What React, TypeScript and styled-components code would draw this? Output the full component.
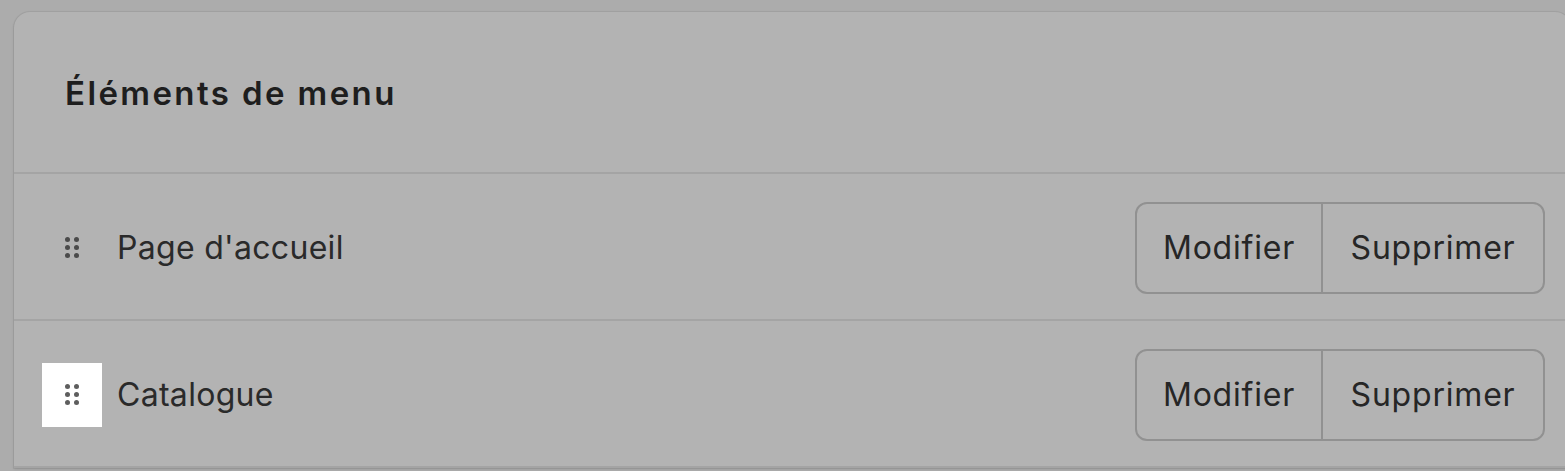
import React from "react";
import styled, { createGlobalStyle } from "styled-components";

const Global = createGlobalStyle`
  html, body {
    margin: 0;
    padding: 0;
    background: #acacac;
    overflow: hidden;
  }
  body {
    font-family: Inter, "Noto Sans", "Liberation Sans", sans-serif;
    -webkit-font-smoothing: antialiased;
  }
`;

const Page = styled.div`
  padding: 12px 0 0 14px;
  width: 1565px;
  height: 471px;
  box-sizing: border-box;
`;

const Card = styled.section`
  width: 1557px;
  background: #b3b3b3;
  border-radius: 16px 16px 0 0;
  box-shadow: 0 0 0 1px rgba(0, 0, 0, 0.05), 0 1px 3px rgba(0, 0, 0, 0.12);
`;

const Header = styled.header`
  height: 162px;
  box-sizing: border-box;
  display: flex;
  align-items: center;
  padding: 2px 0 0 51px;
  border-bottom: 2px solid #a4a4a4;
`;

const Title = styled.h2`
  margin: 0;
  font-size: 33px;
  font-weight: 600;
  color: #1e1e1e;
  letter-spacing: 2.4px;
`;

const Row = styled.div`
  height: 147px;
  box-sizing: border-box;
  display: flex;
  align-items: center;
  padding: 2px 26px 0 28px;
  border-bottom: 2px solid #a4a4a4;
`;

const HandleBox = styled.div<{ $active?: boolean }>`
  width: 60px;
  height: 64px;
  display: flex;
  align-items: center;
  justify-content: center;
  background: ${(p) => (p.$active ? "#ffffff" : "transparent")};
`;

const Dots = styled.div<{ $active?: boolean }>`
  display: grid;
  grid-template-columns: repeat(2, 5px);
  grid-auto-rows: 5px;
  column-gap: 3.5px;
  row-gap: 3px;
  span {
    width: 5px;
    height: 5px;
    border-radius: 50%;
    background: ${(p) => (p.$active ? "#5e5e5e" : "#4a4a4a")};
  }
`;

const Label = styled.span`
  margin-left: 15px;
  flex: 1;
  font-size: 32px;
  color: #2a2a2a;
  letter-spacing: 0.3px;
`;

const ButtonGroup = styled.div`
  display: flex;
  height: 92px;
  border: 2px solid #919191;
  border-radius: 12px;
  box-sizing: border-box;
  overflow: hidden;
`;

const Button = styled.button<{ $width: number }>`
  width: ${(p) => p.$width}px;
  background: transparent;
  border: none;
  font-family: inherit;
  font-size: 32px;
  letter-spacing: 0.8px;
  color: #262626;
  padding: 0;
  cursor: pointer;
  & + & {
    border-left: 2px solid #919191;
  }
`;

const items = [
  { label: "Page d'accueil", active: false },
  { label: "Catalogue", active: true },
];

export default function App() {
  return (
    <>
      <Global />
      <Page>
        <Card>
          <Header>
            <Title>Éléments de menu</Title>
          </Header>
          {items.map((it) => (
            <Row key={it.label}>
              <HandleBox $active={it.active}>
                <Dots $active={it.active}>
                  {Array.from({ length: 6 }).map((_, i) => (
                    <span key={i} />
                  ))}
                </Dots>
              </HandleBox>
              <Label>{it.label}</Label>
              <ButtonGroup>
                <Button $width={184}>Modifier</Button>
                <Button $width={222}>Supprimer</Button>
              </ButtonGroup>
            </Row>
          ))}
        </Card>
      </Page>
    </>
  );
}
